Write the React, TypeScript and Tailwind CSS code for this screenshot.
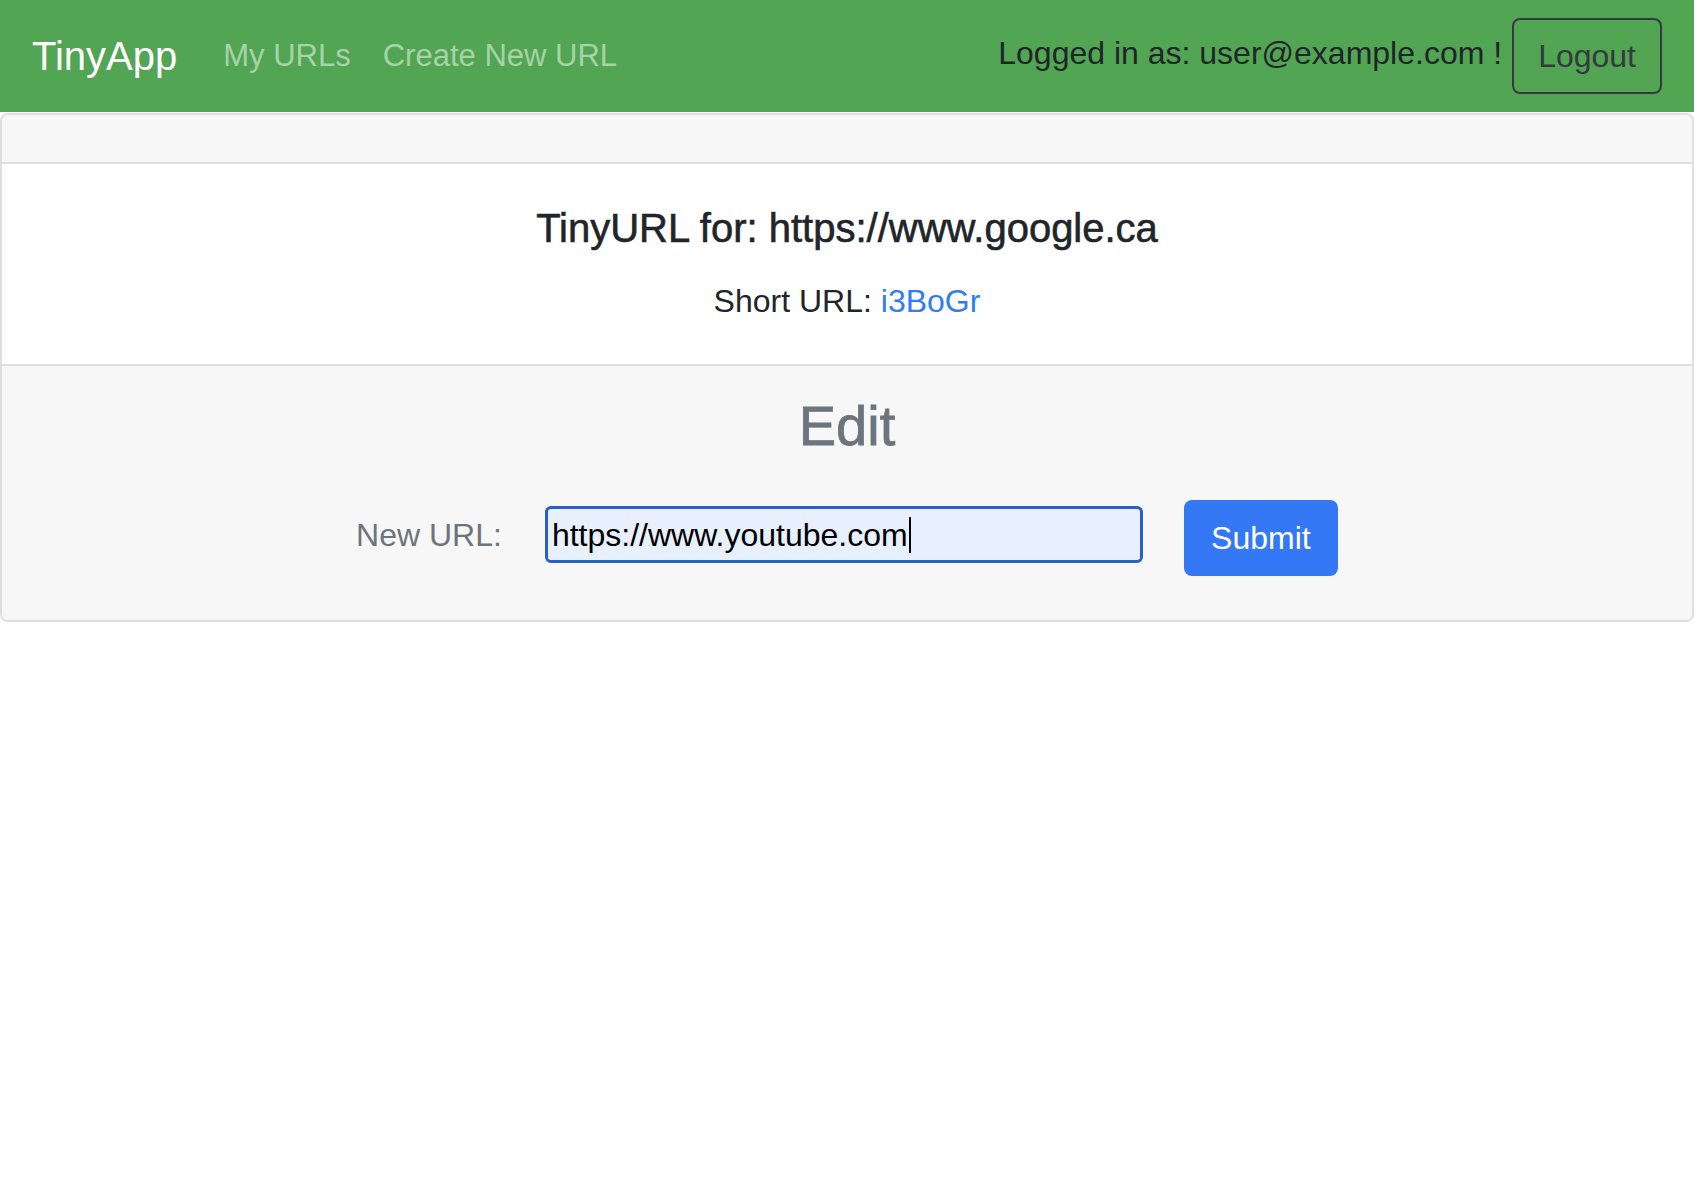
export default function App() {
  return (
    <div className="min-h-screen bg-white font-['Liberation_Sans',Arial,sans-serif] text-[#212529]">
      {/* Navbar */}
      <nav className="flex h-[112px] items-center bg-[#52a552] px-[32px]">
        <a className="mr-[30px] text-[40px] leading-[60px] text-white">TinyApp</a>
        <div className="flex items-center">
          <a className="px-[16px] text-[31px] leading-[48px] text-[#a8d2a8]">My URLs</a>
          <a className="px-[16px] text-[31px] leading-[48px] text-[#a8d2a8]">Create New URL</a>
        </div>
        <div className="ml-auto flex items-center gap-[10px]">
          <span className="pb-[7px] text-[32px] leading-[48px] text-[#212529]">
            Logged in as: user@example.com !
          </span>
          <button className="h-[76px] rounded-[8px] border-2 border-[#343a40] px-[24px] text-[32px] leading-[48px] text-[#343a40]">
            Logout
          </button>
        </div>
      </nav>

      {/* Card */}
      <div className="mt-[1px] overflow-hidden rounded-[8px] border-2 border-[#dfdfdf]">
        <div className="h-[49px] border-b-2 border-[#dfdfdf] bg-[#f7f7f7]" />

        <div className="flex flex-col items-center bg-white pt-[40px] pb-[39px]">
          <h5 className="mb-[25px] text-[40px] leading-[48px] text-[#212529] [-webkit-text-stroke:0.6px_#212529]">
            TinyURL for: https://www.google.ca
          </h5>
          <p className="text-[32px] leading-[48px]">
            Short URL: <a className="text-[#2f7cf6]">i3BoGr</a>
          </p>
        </div>

        <div className="flex flex-col items-center border-t-2 border-[#dfdfdf] bg-[#f7f7f7] pt-[26px] pb-[44px]">
          <h3 className="text-[56px] leading-[67px] text-[#6c757d] [-webkit-text-stroke:0.8px_#6c757d]">Edit</h3>
          <form className="mt-[41px] flex h-[76px] items-start" onSubmit={(e) => e.preventDefault()}>
            <label className="mt-[11px] mr-[43px] text-[32px] leading-[48px] text-[#6c757d]">New URL:</label>
            <div className="mt-[6px] mr-[41px] flex h-[57px] w-[598px] items-center rounded-[6px] border-[3px] border-[#2a5fc4] bg-[#e8f0fe] pl-[4px] text-[32px] leading-[48px] text-black">
              <span>https://www.youtube.com</span>
              <span className="ml-[1px] inline-block h-[36px] w-[2px] bg-black" />
            </div>
            <button
              type="submit"
              className="h-[76px] w-[154px] rounded-[8px] bg-[#3478f6] text-[32px] leading-[48px] text-white"
            >
              Submit
            </button>
          </form>
        </div>
      </div>
    </div>
  )
}
